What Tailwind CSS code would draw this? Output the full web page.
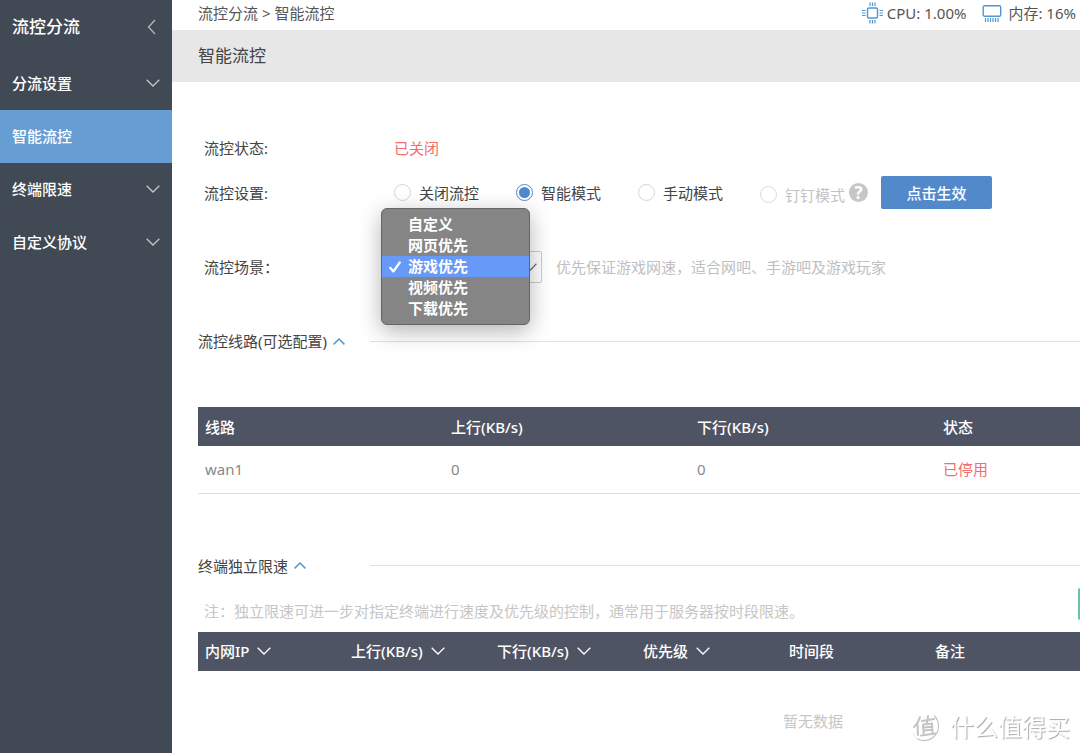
<!DOCTYPE html>
<html lang="zh-CN">
<head>
<meta charset="utf-8">
<meta name="viewport" content="width=device-width, initial-scale=1">
<title>智能流控</title>
<script src="https://cdn.jsdelivr.net/npm/@tailwindcss/browser@4"></script>
</head>
<body class="relative flex min-h-screen overflow-x-hidden bg-white font-['Noto_Sans','Noto_Sans_CJK_SC',sans-serif] text-[15px] leading-5 text-[#444444]">

<aside class="w-[172px] shrink-0 bg-[#404954] text-white">
  <div class="flex h-[57px] items-center justify-between pr-[16px] pl-3 pb-[3px]">
    <h2 class="text-[17px] leading-6 font-medium">流控分流</h2>
    <button type="button" aria-label="收起菜单"><svg class="block" width="9" height="16" viewBox="0 0 9 16" fill="none" stroke="#b5b9be" stroke-width="1.3"><path d="M8 1 1.5 8 8 15"/></svg></button>
  </div>
  <nav class="font-medium">
    <a href="#" class="flex h-[53px] items-center justify-between px-3 pb-0.5">分流设置<svg width="14" height="8" viewBox="0 0 14 8" fill="none" stroke="#c3c6ca" stroke-width="1.3"><path d="M.7.8 7 7 13.3.8"/></svg></a>
    <a href="#" aria-current="page" class="flex h-[53px] items-center bg-[#669dd3] px-3 pb-0.5">智能流控</a>
    <a href="#" class="flex h-[53px] items-center justify-between px-3 pb-0.5">终端限速<svg width="14" height="8" viewBox="0 0 14 8" fill="none" stroke="#c3c6ca" stroke-width="1.3"><path d="M.7.8 7 7 13.3.8"/></svg></a>
    <a href="#" class="flex h-[53px] items-center justify-between px-3 pb-0.5">自定义协议<svg width="14" height="8" viewBox="0 0 14 8" fill="none" stroke="#c3c6ca" stroke-width="1.3"><path d="M.7.8 7 7 13.3.8"/></svg></a>
  </nav>
</aside>

<main class="min-w-0 flex-1 overflow-hidden">
  <header class="flex h-[30px] items-center justify-between pr-1 pb-1 pl-[26px] text-[#555555]">
    <div>流控分流 &gt; 智能流控</div>
    <div class="flex items-center gap-4">
      <span class="flex items-center gap-1">
        <svg width="21" height="22" viewBox="0 0 21 22" fill="none" stroke="#4e96d4"><rect x="5.5" y="6" width="10" height="10" rx="1.5" stroke-width="1.4"/><path stroke-width="1.2" d="M8 .5v3.5M10.500 .5v3.500M13 .5v3.500M8 18v3.500M10.500 18v3.500M13 18v3.500M0 8.500h3.500M0 11h3.500M0 13.500h3.500M17.500 8.500H21M17.500 11H21M17.500 13.500H21"/></svg>
        CPU: 1.00%
      </span>
      <span class="flex items-center gap-1.5">
        <svg width="20" height="17" viewBox="0 0 20 17" fill="none" stroke="#4e96d4"><rect x="1.200" y=".8" width="17.500" height="10.500" rx="1.500" stroke-width="1.400"/><path stroke-width="1.2" d="M3.500 13v4M6 13v4M8.500 13v4M11 13v4M13.500 13v4M16 13v4"/></svg>
        内存: 16%
      </span>
    </div>
  </header>
  <div class="flex h-[52px] items-center bg-[#e7e7e7] pl-[26px]">
    <h1 class="text-[17px] leading-6 text-[#444444]">智能流控</h1>
  </div>

  <form class="flex flex-col pt-14 pl-8">
    <div class="flex h-5 items-center">
      <span class="w-[190px] shrink-0">流控状态:</span>
      <span class="text-[#f26d6d]">已关闭</span>
    </div>
    <fieldset aria-labelledby="mode-label" class="mt-[18px] flex h-[33px] items-center">
      <span id="mode-label" class="w-[190px] shrink-0">流控设置:</span>
      <label class="flex w-[122px] shrink-0 items-center gap-2"><input type="radio" name="mode" class="size-[17px] appearance-none rounded-full border border-[#d4d4d4] bg-white">关闭流控</label>
      <label class="flex w-[122px] shrink-0 items-center gap-2"><input type="radio" name="mode" checked class="size-[17px] appearance-none rounded-full border border-[#4f89cc] bg-[#4f89cc] bg-clip-content p-[2px]">智能模式</label>
      <label class="flex w-[122px] shrink-0 items-center gap-2"><input type="radio" name="mode" class="size-[17px] appearance-none rounded-full border border-[#d4d4d4] bg-white">手动模式</label>
      <label class="flex shrink-0 items-center gap-2 pt-1 text-[#c3c3c3]"><input type="radio" name="mode" disabled class="size-[17px] appearance-none rounded-full border border-[#d9d9d9] bg-white">钉钉模式</label>
      <button type="button" aria-label="帮助" class="ml-1 size-[19px] shrink-0 rounded-full bg-[#c6c6c6] text-[17px] leading-[19px] font-bold text-white">?</button>
      <button type="submit" class="ml-[13px] h-[33px] w-[111px] shrink-0 rounded-xs bg-[#5289cb] font-medium text-white">点击生效</button>
    </fieldset>
    <div class="relative mt-[42px] flex h-8 items-center">
      <label for="scene" class="w-[190px] shrink-0">流控场景：</label>
      <div class="relative shrink-0">
        <select id="scene" class="block h-8 w-[148px] appearance-none rounded-xs border border-[#cccccc] bg-white px-5 text-[#555555]">
          <option>自定义</option>
          <option>网页优先</option>
          <option selected>游戏优先</option>
          <option>视频优先</option>
          <option>下载优先</option>
        </select>
        <svg class="pointer-events-none absolute top-3 right-[5px]" width="13" height="8" viewBox="0 0 13 8" fill="none" stroke="#777777" stroke-width="1.300"><path d="M.6.8 6.500 7 12.400.8"/></svg>
      </div>
      <p class="ml-3.5 whitespace-nowrap text-[#c0c0c0]">优先保证游戏网速，适合网吧、手游吧及游戏玩家</p>
      <ul role="listbox" aria-label="流控场景" class="absolute -top-[43px] left-[177px] w-[149px] rounded-md border border-[#666666] bg-[#858585] py-[5px] leading-[21px] font-bold text-white shadow-[0_6px_22px_rgba(0,0,0,0.3)]">
        <li role="option" class="pl-[26px]">自定义</li>
        <li role="option" class="pl-[26px]">网页优先</li>
        <li role="option" aria-selected="true" class="flex items-center gap-[7px] bg-[#6699f8] pl-[7px]"><svg width="12" height="12" viewBox="0 0 12 12" fill="none" stroke="#fff" stroke-width="2.200" stroke-linecap="round" stroke-linejoin="round"><path d="M1.200 6.800 4.300 10.500 10.800 1.500"/></svg>游戏优先</li>
        <li role="option" class="pl-[26px]">视频优先</li>
        <li role="option" class="pl-[26px]">下载优先</li>
      </ul>
    </div>
  </form>

  <section class="mt-12 pl-[26px]">
    <div class="flex h-5 items-center">
      <h3 class="w-[172px] shrink-0"><button type="button" class="flex items-center gap-1.5">流控线路(可选配置)<svg width="12" height="7" viewBox="0 0 12 7" fill="none" stroke="#5d95cf" stroke-width="1.500"><path d="M.6 6.400 6 1 11.400 6.400"/></svg></button></h3>
      <hr class="flex-1 border-[#e0e0e0]">
    </div>
    <table class="mt-14 w-[1230px] table-fixed border-collapse text-left">
      <thead class="bg-[#4f5464] text-white">
        <tr class="h-[39px]">
          <th class="px-[7px] font-medium">线路</th><th class="px-[7px] font-medium">上行(KB/s)</th><th class="px-[7px] font-medium">下行(KB/s)</th><th class="px-[7px] font-medium">状态</th><td></td>
        </tr>
      </thead>
      <tbody>
        <tr class="h-[47px] border-b border-[#dddddd] text-[#888888]">
          <td class="px-[7px]">wan1</td><td class="px-[7px]">0</td><td class="px-[7px]">0</td><td class="px-[7px] text-[#f26d6d]">已停用</td><td></td>
        </tr>
      </tbody>
    </table>
  </section>

  <section class="mt-[62px] pl-[26px]">
    <div class="flex h-5 items-center">
      <h3 class="w-[172px] shrink-0"><button type="button" class="flex items-center gap-1.5">终端独立限速<svg width="12" height="7" viewBox="0 0 12 7" fill="none" stroke="#5d95cf" stroke-width="1.500"><path d="M.6 6.400 6 1 11.400 6.400"/></svg></button></h3>
      <hr class="flex-1 border-[#e0e0e0]">
    </div>
    <div class="mt-3 flex h-8 items-center pl-1.5">
      <p class="w-[874px] shrink-0 pt-3.5 whitespace-nowrap text-[#c6c6c6]">注：独立限速可进一步对指定终端进行速度及优先级的控制，通常用于服务器按时段限速。</p>
      <button type="button" class="h-8 w-[90px] shrink-0 rounded-xs bg-[#6cc4a1]"></button>
    </div>
    <table class="mt-3 w-[1230px] table-fixed border-collapse text-left">
      <thead class="bg-[#4f5464] text-white">
        <tr class="h-[39px]">
          <th class="w-[146px] px-[7px] font-medium"><button type="button" class="flex items-center gap-2">内网IP<svg width="14" height="8" viewBox="0 0 14 8" fill="none" stroke="#fff" stroke-width="1.300"><path d="M.7.8 7 7 13.300.8"/></svg></button></th>
          <th class="w-[146px] px-[7px] font-medium"><button type="button" class="flex items-center gap-2">上行(KB/s)<svg width="14" height="8" viewBox="0 0 14 8" fill="none" stroke="#fff" stroke-width="1.300"><path d="M.7.8 7 7 13.300.8"/></svg></button></th>
          <th class="w-[146px] px-[7px] font-medium"><button type="button" class="flex items-center gap-2">下行(KB/s)<svg width="14" height="8" viewBox="0 0 14 8" fill="none" stroke="#fff" stroke-width="1.300"><path d="M.7.8 7 7 13.300.8"/></svg></button></th>
          <th class="w-[146px] px-[7px] font-medium"><button type="button" class="flex items-center gap-2">优先级<svg width="14" height="8" viewBox="0 0 14 8" fill="none" stroke="#fff" stroke-width="1.300"><path d="M.7.8 7 7 13.300.8"/></svg></button></th>
          <th class="w-[146px] px-[7px] font-medium">时间段</th>
          <th class="w-[146px] px-[7px] font-medium">备注</th>
          <td></td>
        </tr>
      </thead>
      <tbody>
        <tr><td colspan="7" class="pt-10 pb-5 text-center text-[#c6c6c6]">暂无数据</td></tr>
      </tbody>
    </table>
  </section>
</main>

<div class="pointer-events-none fixed right-2.5 bottom-2 flex items-center gap-2">
  <svg width="32" height="36" viewBox="0 0 32 36" fill="none" stroke="#c4c4c4" stroke-linecap="round"><path stroke-width="1.200" d="M24.500 7a14.500 14.500 0 0 1-17 23"/><path stroke="#e4e4e4" stroke-width=".8" d="M7.500 30A14.500 14.500 0 0 1 2.500 24"/><path stroke-width="2" d="M10 8C9 12 7 15 4 18M7.500 15.500 8 26M12 12l12-2M18 7l-1 7M13 15.500l.8 10M13 15.500l9-1 .5 9.500M14 18.500l7.500-.8M14 21.500l7.500-.8M11 26.500l15-2"/></svg>
  <span class="text-[24px] leading-9 text-white [text-shadow:1px_1px_1px_#a8a8a8]">什么值得买</span>
</div>
</body>
</html>
